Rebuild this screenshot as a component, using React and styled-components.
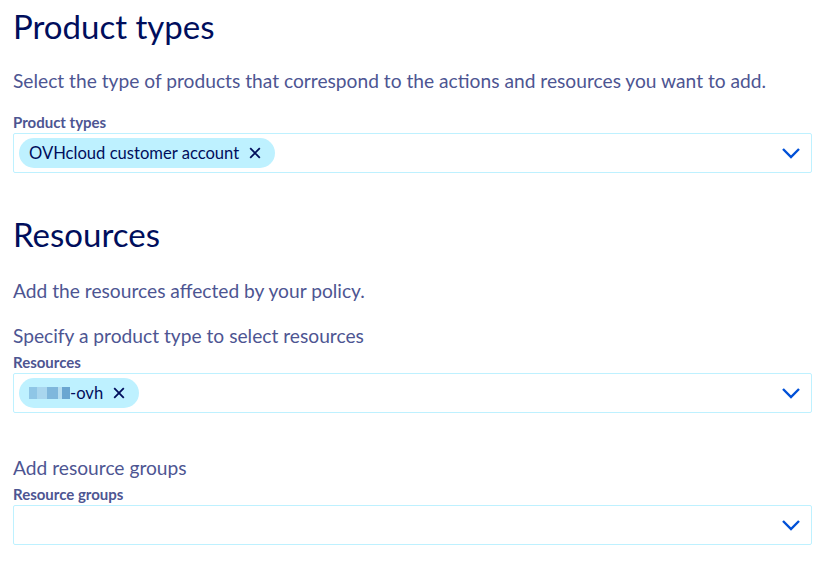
import React from 'react';
import styled, { createGlobalStyle } from 'styled-components';

const GlobalStyle = createGlobalStyle`
  body {
    margin: 0;
    background: #fff;
    font-family: Lato, "Open Sans", sans-serif;
  }
`;

const Page = styled.div`
  padding: 0 12px 0 13px;
  display: flex;
  flex-direction: column;
`;

const Title = styled.h2`
  margin: ${props => props.first ? '6px' : '41px'} 0 0;
  font-size: 33px;
  line-height: 40px;
  font-weight: 400;
  color: #000e5c;
`;

const Lead = styled.p`
  margin: ${props => props.gap}px 0 0;
  font-size: 19.2px;
  line-height: 24px;
  color: #4d5592;
`;

const Label = styled.label`
  display: block;
  margin-top: ${props => props.gap}px;
  font-size: 15px;
  line-height: 18px;
  font-weight: 700;
  color: #4d5592;
`;

const Select = styled.div`
  margin-top: 2px;
  height: 40px;
  box-sizing: border-box;
  border: 1px solid #bef1ff;
  border-radius: 2px;
  display: flex;
  align-items: center;
  justify-content: space-between;
  padding: 0 10px 0 5px;
`;

const Chip = styled.span`
  display: inline-flex;
  align-items: center;
  gap: 10px;
  height: 30px;
  padding: 0 14px 0 10px;
  border-radius: 15px;
  background: #bef1ff;
  color: #000e5c;
  font-size: 16.6px;
`;

const Blur = styled.span`
  display: inline-block;
  width: 41px;
  height: 12px;
  background: linear-gradient(90deg, #8fc6e6 0 20%, #a9d6ee 20% 45%, #7fb7dc 45% 70%, #b6ddf0 70% 80%, #6aa6d1 80% 100%);
`;

const Close = () => (
  <svg width="12" height="12" viewBox="0 0 12 12">
    <path d="M1.2 1.2 L10.8 10.8 M10.8 1.2 L1.2 10.8" stroke="#000e5c" strokeWidth="1.8" fill="none" />
  </svg>
);

const Chevron = () => (
  <svg width="20" height="12" viewBox="0 0 20 12">
    <path d="M2 2 L10 10 L18 2" stroke="#0050d7" strokeWidth="2.4" fill="none" />
  </svg>
);

export default function App() {
  return (
    <>
      <GlobalStyle />
      <Page>
        <Title first>Product types</Title>
        <Lead gap={23}>Select the type of products that correspond to the actions and resources you want to add.</Lead>
        <Label gap={20}>Product types</Label>
        <Select>
          <Chip>OVHcloud customer account <Close /></Chip>
          <Chevron />
        </Select>

        <Title>Resources</Title>
        <Lead gap={25}>Add the resources affected by your policy.</Lead>
        <Lead gap={21}>Specify a product type to select resources</Lead>
        <Label gap={5}>Resources</Label>
        <Select>
          <Chip><span><Blur />-ovh</span> <Close /></Chip>
          <Chevron />
        </Select>

        <Lead gap={43}>Add resource groups</Lead>
        <Label gap={5}>Resource groups</Label>
        <Select>
          <span />
          <Chevron />
        </Select>
      </Page>
    </>
  );
}
